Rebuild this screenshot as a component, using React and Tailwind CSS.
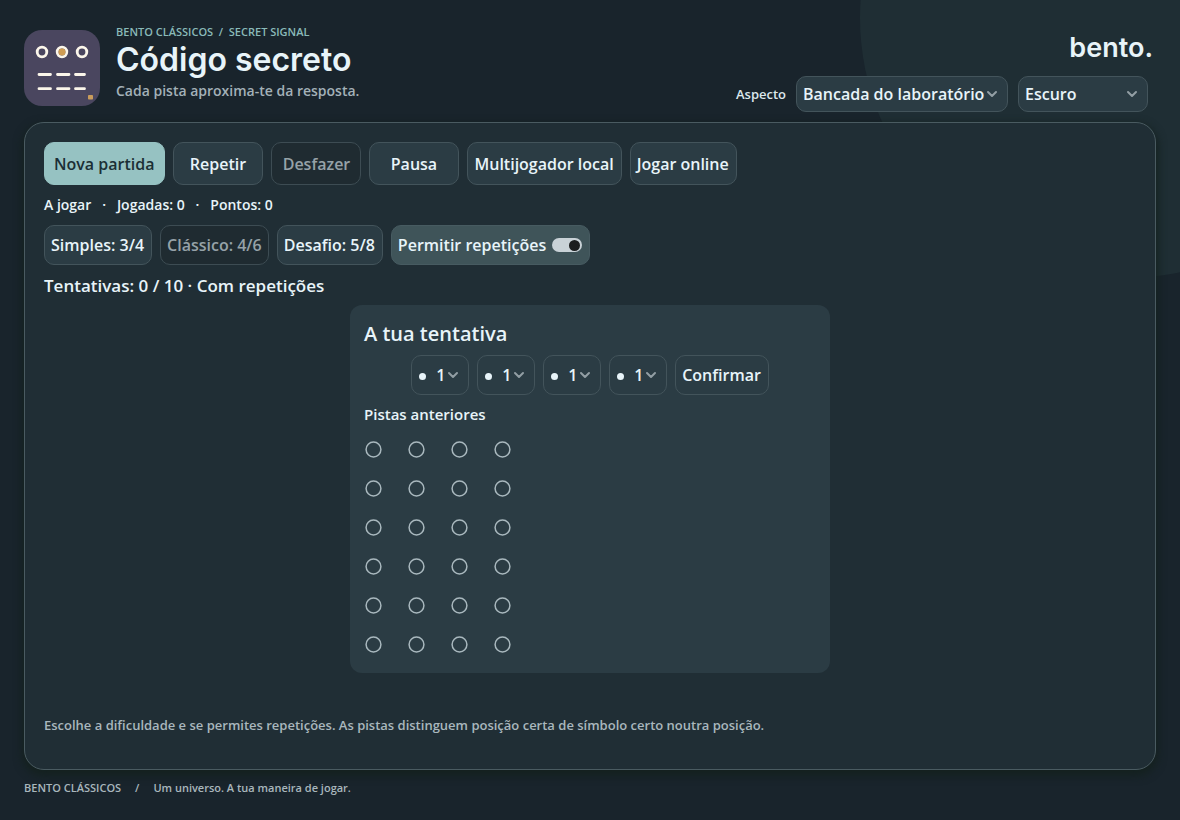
import { useState } from 'react';
import { ChevronDown } from 'lucide-react';

const LEVELS = [
  { id: 'simples', label: 'Simples: 3/4' },
  { id: 'classico', label: 'Clássico: 4/6' },
  { id: 'desafio', label: 'Desafio: 5/8' },
];

const SLOTS = [1, 2, 3, 4];
const SYMBOLS = [1, 2, 3, 4, 5, 6];
const CLUE_ROWS = [1, 2, 3, 4, 5, 6];

/**
 * Game icon
 */
const GameIcon = () => (
  <svg viewBox="0 0 76 76" className="size-[76px] shrink-0" aria-hidden="true">
    <rect width="76" height="76" rx="18" fill="#4a465f" />
    <g fill="none" stroke="#fbf6ea" strokeWidth="2.8">
      <circle cx="18" cy="22" r="4.8" />
      <circle cx="38" cy="22" r="4.8" />
      <circle cx="58" cy="22" r="4.8" />
    </g>
    <circle cx="38" cy="22" r="3.5" fill="#cf9c52" />
    <g stroke="#fbf6ea" strokeWidth="2.8" strokeLinecap="round">
      <path d="M15 44.500h11.500M33.500 44.500h11.500M51.500 44.500h9" />
      <path d="M15 58.700h11.500M33.500 58.700h11.500M51.500 58.700h9" />
    </g>
    <rect x="64" y="65" width="5" height="4.500" rx="0.800" fill="#c99c5c" />
  </svg>
);

/**
 * Action button
 */
const Button = ({ variant = 'default', className = '', ...props }) => {
  const variantMap = {
    default: 'border-[#43545b] bg-[#2b3c44] pr-[7px] pl-1.5 text-[#e8f4f9]',
    primary: 'border-[#96c2c2] bg-[#96c2c2] pr-2.5 pl-[9px] text-[#1b2f35]',
    disabled: 'border-[#3d4c53] bg-[#1f2b31] px-1.5 text-[#96a2a8]',
  };

  return (
    <button
      type="button"
      disabled={variant === 'disabled'}
      className={`rounded-[10px] border text-base whitespace-nowrap ${variantMap[variant]} ${className}`}
      {...props}
    />
  );
};

/**
 * Select with its own chevron
 */
const Select = ({ className = '', wrapperClassName = '', dot = false, children, ...props }) => (
  <div className={`relative ${wrapperClassName}`}>
    {dot && (
      <span className="pointer-events-none absolute top-[18px] left-2 size-[7px] rounded-full bg-[#e8f4f9]" />
    )}
    <select
      className={`w-full appearance-none rounded-[10px] border border-[#43545b] bg-[#2b3c44] text-base text-[#e8f4f9] ${className}`}
      {...props}
    >
      {children}
    </select>
    <ChevronDown
      className="pointer-events-none absolute inset-y-0 right-2 my-auto size-4 text-[#929ea4]"
      strokeWidth={3}
      aria-hidden="true"
    />
  </div>
);

const Header = () => (
  <header className="relative flex h-[122px] items-start justify-between">
    <div className="flex gap-4 pt-6">
      <div className="pt-1.5">
        <GameIcon />
      </div>
      <div>
        <p className="text-[11px] leading-4 whitespace-pre text-[#8abab9]">
          {'BENTO CLÁSSICOS  /  SECRET SIGNAL'}
        </p>
        <h1 className="font-[Inter,sans-serif] text-[32px] leading-10 font-semibold text-[#e8f4f9]">
          Código secreto
        </h1>
        <p className="text-sm leading-[22px] text-[#a3b1b8]">Cada pista aproxima-te da resposta.</p>
      </div>
    </div>
    <div className="flex flex-col items-end pt-7">
      <a href="#" className="pr-[3px] font-[Inter,sans-serif] text-[27px] leading-10 font-semibold text-[#e8f4f9]">
        bento.
      </a>
      <div className="flex items-center gap-2.5 pt-2 pr-2">
        <label htmlFor="aspecto" className="text-[13px] leading-5 text-[#dce8ed]">
          Aspecto
        </label>
        <Select id="aspecto" wrapperClassName="w-[212px]" className="h-9 pr-5 pl-1.5">
          <option>Bancada do laboratório</option>
        </Select>
        <Select aria-label="Tema" wrapperClassName="w-[130px]" className="h-9 pr-5 pl-1.5">
          <option>Escuro</option>
          <option>Claro</option>
        </Select>
      </div>
    </div>
  </header>
);

/**
 * Guess editor and clue history
 */
const GuessPanel = () => (
  <section className="mx-auto mt-2 w-full max-w-[480px] rounded-xl bg-[#2b3c44] px-3.5 pt-3.5 pb-[9px]">
    <h2 className="text-xl leading-[30px]">A tua tentativa</h2>
    <div className="mt-1.5 flex justify-center gap-2">
      {SLOTS.map((slot) => (
        <Select
          key={slot}
          dot
          aria-label={`Posição ${slot}`}
          wrapperClassName="w-[58px]"
          className="h-10 pr-4 pl-6"
        >
          {SYMBOLS.map((symbol) => (
            <option key={symbol}>{symbol}</option>
          ))}
        </Select>
      ))}
      <Button className="h-10">Confirmar</Button>
    </div>
    <h3 className="mt-[7px] mb-1 text-[15px] leading-6">Pistas anteriores</h3>
    <ol>
      {CLUE_ROWS.map((row) => (
        <li key={row} className="flex h-[39px] items-center gap-6">
          {SLOTS.map((slot) => (
            <svg key={slot} viewBox="0 0 19 19" className="size-[19px]" aria-hidden="true">
              <circle cx="9.500" cy="9.500" r="7.400" fill="none" stroke="#a9b8be" strokeWidth="1.500" />
            </svg>
          ))}
        </li>
      ))}
    </ol>
  </section>
);

const App = () => {
  const [level, setLevel] = useState('classico');
  const [repeats, setRepeats] = useState(true);

  return (
    <div className="relative flex min-h-screen flex-col overflow-hidden bg-[#19242c] px-6 font-['Open_Sans',sans-serif] font-semibold text-[#e8f4f9]">
      <div className="absolute -top-[242px] -right-[210px] h-[520px] w-[530px] rounded-[50%] bg-[#1f2e34]" />
      <Header />

      <main className="relative flex-1 rounded-[20px] border border-[#4a5b61] bg-[#202e35] p-[19px] shadow-[0_4px_8px_2px_#14211f]">
        <div className="flex flex-wrap gap-2">
          <Button variant="primary" className="h-[43px]">Nova partida</Button>
          <Button className="h-[43px] min-w-[90px]">Repetir</Button>
          <Button variant="disabled" className="h-[43px] min-w-[90px]">Desfazer</Button>
          <Button className="h-[43px] min-w-[90px]">Pausa</Button>
          <Button className="h-[43px]">Multijogador local</Button>
          <Button className="h-[43px]">Jogar online</Button>
        </div>

        <p className="my-2.5 text-sm leading-5 whitespace-pre-wrap">
          {'A jogar   ·   Jogadas: 0   ·   Pontos: 0'}
        </p>

        <div className="flex flex-wrap gap-2">
          {LEVELS.map(({ id, label }) => (
            <Button
              key={id}
              variant={id === level ? 'disabled' : 'default'}
              className="h-10"
              onClick={() => setLevel(id)}
            >
              {label}
            </Button>
          ))}
          <label className="flex h-10 items-center gap-1.5 rounded-[10px] border border-[#475b61] bg-[#3f5459] pr-[7px] pl-1.5 text-base">
            Permitir repetições
            <input
              type="checkbox"
              role="switch"
              checked={repeats}
              onChange={(e) => setRepeats(e.target.checked)}
              className="flex h-3.5 w-[30px] appearance-none items-center rounded-full bg-[#c9d2d7] px-0.5 before:block before:size-[11px] before:rounded-full before:bg-[#1b1d1e] checked:justify-end"
            />
          </label>
        </div>

        <p className="mt-2.5 text-[17px] leading-[22px]">Tentativas: 0 / 10 · Com repetições</p>

        <GuessPanel />

        <p className="mt-10 text-[13px] leading-6 text-[#a9b7bd]">
          Escolhe a dificuldade e se permites repetições. As pistas distinguem posição certa de símbolo certo noutra
          posição.
        </p>
      </main>

      <footer className="relative flex h-[50px] gap-3.5 pt-2.5 text-[11px] leading-4 text-[#a9b7bd]">
        <span>BENTO CLÁSSICOS</span>
        <span>/</span>
        <span>Um universo. A tua maneira de jogar.</span>
      </footer>
    </div>
  );
};

export default App;
